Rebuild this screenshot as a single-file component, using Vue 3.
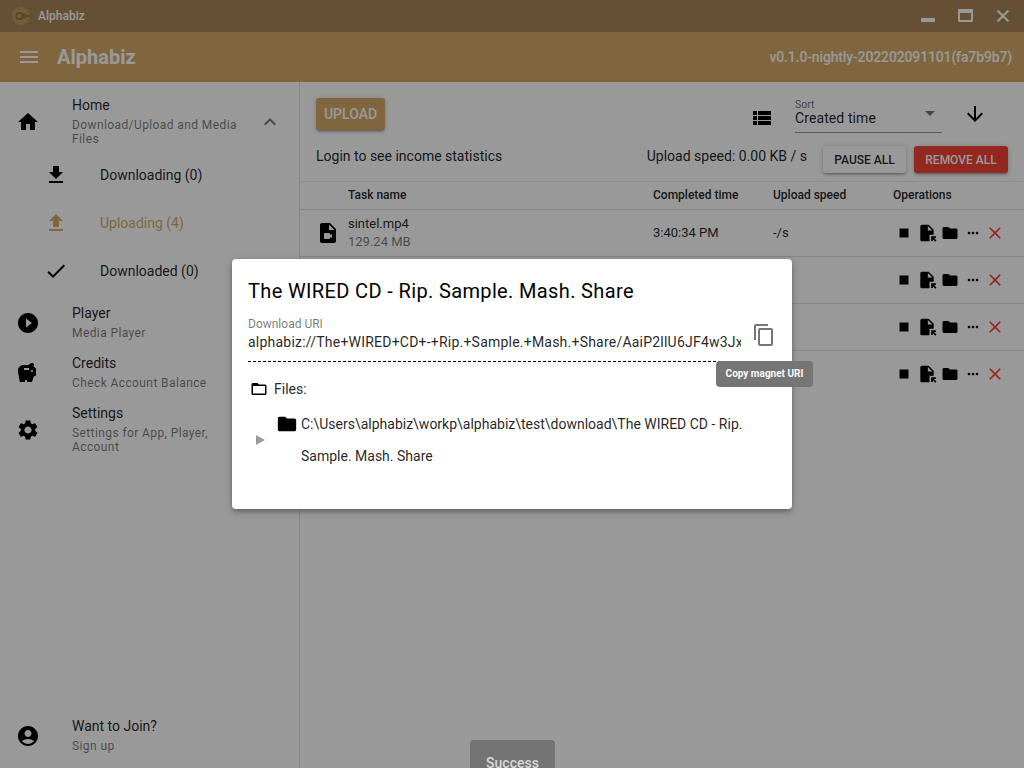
<script setup>
const icons = {
  menu: 'M3 18h18v-2H3v2zm0-5h18v-2H3v2zm0-7v2h18V6H3z',
  home: 'M10 20v-6h4v6h5v-8h3L12 3 2 12h3v8z',
  download: 'M19 9h-4V3H9v6H5l7 7 7-7zM5 18v2h14v-2H5z',
  upload: 'M9 16h6v-6h4l-7-7-7 7h4zm-4 2h14v2H5z',
  check: 'M9 16.17L4.83 12l-1.42 1.41L9 19 21 7l-1.41-1.41z',
  play: 'M12 2C6.48 2 2 6.48 2 12s4.48 10 10 10 10-4.48 10-10S17.52 2 12 2zm-2 14.5v-9l6 4.5-6 4.5z',
  savings: 'M19.83,7.5l-2.27-2.27c0.07-0.42,0.18-0.81,0.32-1.15C17.96,3.9,18,3.71,18,3.5C18,2.67,17.33,2,16.5,2c-1.64,0-3.09,0.79-4,2l-5,0 C4.46,4,2,6.46,2,9.5S4,21,4,21l5,0v-2h2v2l5,0l1.68-5.59L20,14.47V7.5H19.83z M13,9H8V7h5V9z M16,11c-0.55,0-1-0.45-1-1 c0-0.55,0.45-1,1-1s1,0.45,1,1C17,10.55,16.55,11,16,11z',
  settings: 'M19.14 12.94c.04-.3.06-.61.06-.94 0-.32-.02-.64-.07-.94l2.03-1.58c.18-.14.23-.41.12-.61l-1.92-3.32c-.12-.22-.37-.29-.59-.22l-2.39.96c-.5-.38-1.03-.7-1.62-.94l-.36-2.54c-.04-.24-.24-.41-.48-.41h-3.84c-.24 0-.43.17-.47.41l-.36 2.54c-.59.24-1.13.57-1.62.94l-2.39-.96c-.22-.08-.47 0-.59.22L2.74 8.87c-.12.21-.08.47.12.61l2.03 1.58c-.05.3-.09.63-.09.94s.02.64.07.94l-2.03 1.58c-.18.14-.23.41-.12.61l1.92 3.32c.12.22.37.29.59.22l2.39-.96c.5.38 1.03.7 1.62.94l.36 2.54c.05.24.24.41.48.41h3.84c.24 0 .44-.17.47-.41l.36-2.54c.59-.24 1.13-.56 1.62-.94l2.39.96c.22.08.47 0 .59-.22l1.92-3.32c.12-.22.07-.47-.12-.61l-2.01-1.58zM12 15.6c-1.98 0-3.6-1.62-3.6-3.6s1.62-3.6 3.6-3.6 3.6 1.62 3.6 3.6-1.62 3.6-3.6 3.6z',
  account: 'M12 2C6.48 2 2 6.48 2 12s4.48 10 10 10 10-4.48 10-10S17.52 2 12 2zm0 4c1.93 0 3.5 1.57 3.5 3.5S13.93 13 12 13s-3.5-1.57-3.5-3.5S10.07 6 12 6zm0 14c-2.03 0-4.43-.82-6.14-2.88C7.55 15.8 9.68 15 12 15s4.45.8 6.14 2.12C16.43 19.18 14.03 20 12 20z',
  chevron: 'M12 8l-6 6 1.41 1.41L12 10.83l4.59 4.58L18 14z',
  list: 'M3 14h4v-4H3v4zm0 5h4v-4H3v4zM3 9h4V5H3v4zm5 5h13v-4H8v4zm0 5h13v-4H8v4zM8 5v4h13V5H8z',
  arrowDown: 'M20 12l-1.41-1.41L13 16.17V4h-2v12.17l-5.58-5.59L4 12l8 8 8-8z',
  video: 'M14,2H6.01c-1.1,0-2,0.89-2,2L4,20c0,1.1,0.89,2,1.99,2H18c1.1,0,2-0.9,2-2V8L14,2z M13,9V3.5L18.5,9H13z M14,14l2-1.06v4.12L14,16 v1c0,0.55-0.45,1-1,1H9c-0.55,0-1-0.45-1-1v-4c0-0.55,0.45-1,1-1h4c0.55,0,1,0.45,1,1V14z',
  stop: 'M6 6h12v12H6z',
  fileOpen: 'M14,2H6C4.9,2,4.01,2.9,4.01,4L4,20c0,1.1,0.89,2,1.99,2H15v-8h5V8L14,2z M13,9V3.5L18.5,9H13z M17,21.66V16h5.66v2h-2.24 l2.95,2.95l-1.41,1.41L19,19.41l0,2.24H17z',
  folder: 'M10 4H4c-1.1 0-1.99.9-1.99 2L2 18c0 1.1.9 2 2 2h16c1.1 0 2-.9 2-2V8c0-1.1-.9-2-2-2h-8l-2-2z',
  folderOpen: 'M20 6h-8l-2-2H4c-1.1 0-1.99.9-1.99 2L2 18c0 1.1.9 2 2 2h16c1.1 0 2-.9 2-2V8c0-1.1-.9-2-2-2zm0 12H4V8h16v10z',
  more: 'M6 10c-1.1 0-2 .9-2 2s.9 2 2 2 2-.9 2-2-.9-2-2-2zm12 0c-1.1 0-2 .9-2 2s.9 2 2 2 2-.9 2-2-.9-2-2-2zm-6 0c-1.1 0-2 .9-2 2s.9 2 2 2 2-.9 2-2-.9-2-2-2z',
  close: 'M19 6.41L17.59 5 12 10.59 6.41 5 5 6.41 10.59 12 5 17.59 6.41 19 12 13.41 17.59 19 19 17.59 13.41 12z',
  copy: 'M16 1H4c-1.1 0-2 .9-2 2v14h2V3h12V1zm3 4H8c-1.1 0-2 .9-2 2v14c0 1.1.9 2 2 2h11c1.1 0 2-.9 2-2V7c0-1.1-.9-2-2-2zm0 16H8V7h11v14z'
}

const subItems = [
  { icon: 'download', label: 'Downloading (0)' },
  { icon: 'upload', label: 'Uploading (4)', active: true },
  { icon: 'check', label: 'Downloaded (0)' }
]

const navItems = [
  { icon: 'play', title: 'Player', caption: 'Media Player' },
  { icon: 'savings', title: 'Credits', caption: 'Check Account Balance' },
  { icon: 'settings', title: 'Settings', caption: 'Settings for App, Player, Account' }
]

// only the first row is visible, the dialog hides the rest
const rows = [
  { name: 'sintel.mp4', size: '129.24 MB', time: '3:40:34 PM', speed: '-/s' },
  { name: '', size: '', time: '', speed: '' },
  { name: '', size: '', time: '', speed: '' },
  { name: '', size: '', time: '', speed: '' }
]
</script>

<template>
  <div class="app">
    <div class="titlebar">
      <svg class="logo" viewBox="0 0 18 18" width="18" height="18">
        <circle cx="9" cy="9" r="9" fill="#c29c5c" />
        <circle cx="7.5" cy="9" r="3.2" fill="none" stroke="#8a6f47" stroke-width="1.6" />
        <path d="M10 6.5l3 5M10 11.5l3-5M13 9h5" fill="none" stroke="#8a6f47" stroke-width="1.4" />
      </svg>
      <span class="titlebar-name">Alphabiz</span>
      <div class="window-btns">
        <span class="win-min"></span>
        <span class="win-max"></span>
        <svg class="win-close" viewBox="0 0 24 24" width="20" height="20"><path :d="icons.close" /></svg>
      </div>
    </div>

    <header class="header">
      <svg class="menu-icon" viewBox="0 0 24 24" width="24" height="24"><path :d="icons.menu" /></svg>
      <span class="brand">Alphabiz</span>
      <span class="version">v0.1.0-nightly-202202091101(fa7b9b7)</span>
    </header>

    <div class="body">
      <aside class="drawer">
        <nav>
          <div class="nav-item">
            <svg class="nav-icon" viewBox="0 0 24 24"><path :d="icons.home" /></svg>
            <div class="nav-text">
              <div class="nav-title">Home</div>
              <div class="nav-caption">Download/Upload and Media Files</div>
            </div>
            <svg class="chevron" viewBox="0 0 24 24"><path :d="icons.chevron" /></svg>
          </div>
          <div v-for="s in subItems" :key="s.label" class="sub-item" :class="{ active: s.active }">
            <svg class="sub-icon" viewBox="0 0 24 24"><path :d="icons[s.icon]" /></svg>
            <span>{{ s.label }}</span>
          </div>
          <div v-for="n in navItems" :key="n.title" class="nav-item">
            <svg class="nav-icon" viewBox="0 0 24 24"><path :d="icons[n.icon]" /></svg>
            <div class="nav-text">
              <div class="nav-title">{{ n.title }}</div>
              <div class="nav-caption">{{ n.caption }}</div>
            </div>
          </div>
        </nav>
        <div class="nav-item">
          <svg class="nav-icon" viewBox="0 0 24 24"><path :d="icons.account" /></svg>
          <div class="nav-text">
            <div class="nav-title">Want to Join?</div>
            <div class="nav-caption">Sign up</div>
          </div>
        </div>
      </aside>

      <main class="main">
        <div class="toolbar">
          <button class="btn btn-upload">UPLOAD</button>
          <div class="toolbar-right">
            <svg class="list-icon" viewBox="0 0 24 24"><path :d="icons.list" /></svg>
            <div class="sort">
              <div class="sort-label">Sort</div>
              <div class="sort-value">Created time</div>
              <span class="sort-arrow"></span>
            </div>
            <svg class="down-icon" viewBox="0 0 24 24"><path :d="icons.arrowDown" /></svg>
          </div>
        </div>

        <div class="stats">
          <span class="login-note">Login to see income statistics</span>
          <span class="speed">Upload speed: 0.00 KB / s</span>
          <button class="btn btn-small btn-pause">PAUSE ALL</button>
          <button class="btn btn-small btn-remove">REMOVE ALL</button>
        </div>

        <div class="table">
          <div class="table-row table-head">
            <span></span>
            <span>Task name</span>
            <span>Completed time</span>
            <span>Upload speed</span>
            <span>Operations</span>
          </div>
          <div v-for="(r, i) in rows" :key="i" class="table-row task-row">
            <svg class="task-icon" viewBox="0 0 24 24"><path :d="icons.video" /></svg>
            <div>
              <div class="task-name">{{ r.name }}</div>
              <div class="task-size">{{ r.size }}</div>
            </div>
            <span>{{ r.time }}</span>
            <span>{{ r.speed }}</span>
            <div class="ops">
              <svg class="op-stop" viewBox="0 0 24 24"><path :d="icons.stop" /></svg>
              <svg class="op-file" viewBox="0 0 24 24"><path :d="icons.fileOpen" /></svg>
              <svg class="op-folder" viewBox="0 0 24 24"><path :d="icons.folder" /></svg>
              <svg class="op-more" viewBox="0 0 24 24"><path :d="icons.more" /></svg>
              <svg class="op-close" viewBox="0 0 24 24"><path :d="icons.close" /></svg>
            </div>
          </div>
        </div>
      </main>
    </div>

    <div class="backdrop"></div>
    <div class="notify">Success</div>

    <div class="dialog">
      <div class="dialog-title">The WIRED CD - Rip. Sample. Mash. Share</div>
      <div class="uri-row">
        <div class="uri-col">
          <div class="uri-label">Download URI</div>
          <div class="uri-value">alphabiz://The+WIRED+CD+-+Rip.+Sample.+Mash.+Share/AaiP2llU6JF4w3JxaKm9</div>
        </div>
        <svg class="copy-icon" viewBox="0 0 24 24"><path :d="icons.copy" /></svg>
      </div>
      <div class="files-label">
        <svg class="files-icon" viewBox="0 0 24 24"><path :d="icons.folderOpen" /></svg>
        <span>Files:</span>
      </div>
      <div class="tree">
        <span class="tree-arrow"></span>
        <svg class="tree-folder" viewBox="0 0 24 24"><path :d="icons.folder" /></svg>
        <div class="tree-text">C:\Users\alphabiz\workp\alphabiz\test\download\The WIRED CD - Rip. Sample. Mash. Share</div>
      </div>
    </div>

    <div class="tooltip">Copy magnet URI</div>
  </div>
</template>

<style>
html, body {
  margin: 0;
  background: #fff;
}
</style>

<style scoped>
.app {
  position: relative;
  width: 1024px;
  height: 768px;
  overflow: hidden;
  display: flex;
  flex-direction: column;
  font-family: Roboto, "Liberation Sans", sans-serif;
  font-size: 14px;
  color: #000;
  background: #fff;
}

svg { display: block; flex: none; }

/* Title bar */
.titlebar {
  height: 32px;
  display: flex;
  align-items: center;
  padding-left: 12px;
  background: #a8865a;
  color: #fff;
  flex: none;
}
.logo { margin-right: 8px; }
.titlebar-name {
  font-size: 12px;
  font-weight: 500;
}
.window-btns {
  margin-left: auto;
  display: flex;
  align-items: center;
}
.win-min {
  width: 14px;
  height: 4px;
  margin: 8px 0 0;
  background: #fff;
  border-radius: 1px;
}
.win-max {
  box-sizing: border-box;
  width: 15px;
  height: 13px;
  margin: -1px 0 0 23px;
  border: 2px solid #fff;
  border-top-width: 4px;
  border-radius: 1px;
}
.win-close {
  margin: -1px 11px 0 20px;
  fill: #fff;
  stroke: #fff;
  stroke-width: 0.8;
}

/* Header */
.header {
  height: 50px;
  display: flex;
  align-items: center;
  padding: 0 12px 0 17px;
  background: #d4aa69;
  color: #fff;
  flex: none;
}
.menu-icon { fill: #fff; margin-right: 16px; }
.brand {
  font-size: 20px;
  font-weight: 700;
}
.version {
  margin-left: auto;
  font-size: 14px;
  font-weight: 500;
  letter-spacing: -0.14px;
}

.body {
  flex: 1;
  display: flex;
  min-height: 0;
}

/* Drawer */
.drawer {
  box-sizing: border-box;
  width: 300px;
  flex: none;
  display: flex;
  flex-direction: column;
  justify-content: space-between;
  padding: 5px 0 10px;
  border-right: 1px solid rgba(0, 0, 0, 0.12);
}
.nav-item {
  display: flex;
  align-items: center;
  padding: 8px 16px 5px;
  position: relative;
}
.nav-icon {
  width: 24px;
  height: 24px;
  margin: 2px 32px 0 0;
}
.nav-text { width: 184px; }
.nav-title {
  line-height: 20px;
  color: rgba(0, 0, 0, 0.87);
}
.nav-caption {
  margin-top: 3px;
  font-size: 12px;
  line-height: 14px;
  letter-spacing: 0.4px;
  color: rgba(0, 0, 0, 0.54);
}
.chevron {
  width: 24px;
  height: 24px;
  margin: 2px 0 0 2px;
  fill: rgba(0, 0, 0, 0.54);
}
.sub-item {
  height: 48px;
  display: flex;
  align-items: center;
  padding-left: 44px;
  color: rgba(0, 0, 0, 0.87);
}
.sub-icon {
  width: 24px;
  height: 24px;
  margin-right: 32px;
}
.sub-item.active { color: #d4aa69; }
.sub-item.active .sub-icon { fill: #d4aa69; }

/* Main */
.main {
  flex: 1;
  min-width: 0;
}
.toolbar {
  box-sizing: border-box;
  height: 64px;
  display: flex;
  align-items: flex-start;
  justify-content: space-between;
  padding: 16px 37px 0 16px;
}
.btn {
  border: 0;
  border-radius: 3px;
  font-family: inherit;
  font-weight: 500;
  padding: 0;
  box-shadow: 0 1px 5px rgba(0, 0, 0, 0.2), 0 2px 2px rgba(0, 0, 0, 0.14), 0 3px 1px -2px rgba(0, 0, 0, 0.12);
}
.btn-upload {
  width: 69px;
  height: 32px;
  font-size: 14px;
  background: #d4aa69;
  color: #fff;
}
.toolbar-right {
  display: flex;
  align-items: flex-start;
}
.list-icon {
  width: 24px;
  height: 24px;
  margin: 8px 21px 0 0;
}
.sort {
  position: relative;
  box-sizing: border-box;
  width: 147px;
  height: 35px;
  padding-top: 1px;
  border-bottom: 1px solid rgba(0, 0, 0, 0.42);
}
.sort-label {
  font-size: 10.5px;
  line-height: 12px;
  color: rgba(0, 0, 0, 0.6);
}
.sort-value {
  margin-top: -1px;
  line-height: 16px;
  letter-spacing: 0.1px;
  color: rgba(0, 0, 0, 0.87);
}
.sort-arrow {
  position: absolute;
  right: 7px;
  top: 13px;
  border: 5px solid transparent;
  border-top-color: rgba(0, 0, 0, 0.54);
}
.down-icon {
  width: 24px;
  height: 24px;
  margin: 4px 0 0 21px;
}
.stats {
  height: 35px;
  display: flex;
  align-items: flex-start;
  padding: 0 16px;
  line-height: 20px;
  color: rgba(0, 0, 0, 0.87);
}
.speed { margin-left: auto; margin-right: 16px; }
.btn-small {
  height: 27px;
  font-size: 12px;
}
.btn-pause {
  width: 83px;
  background: #fff;
  color: rgba(0, 0, 0, 0.87);
  margin-right: 8px;
}
.btn-remove {
  width: 94px;
  background: #f44336;
  color: #fff;
}

/* Table */
.table {
  border-top: 1px solid rgba(0, 0, 0, 0.08);
}
.table-row {
  display: grid;
  grid-template-columns: 48px 305px 120px 120px 1fr;
  align-items: center;
  color: rgba(0, 0, 0, 0.87);
}
.table-head {
  box-sizing: border-box;
  height: 28px;
  padding-bottom: 1px;
  font-size: 12px;
  font-weight: 500;
  border-bottom: 1px solid rgba(0, 0, 0, 0.12);
}
.task-row {
  box-sizing: border-box;
  height: 47px;
  padding-bottom: 1px;
  font-size: 13px;
  border-bottom: 1px solid rgba(0, 0, 0, 0.12);
}
.task-row:last-child { border-bottom: 0; }
.task-icon {
  width: 24px;
  height: 24px;
  margin-left: 16px;
}
.task-name {
  line-height: 18px;
  min-height: 18px;
}
.task-size {
  line-height: 18px;
  min-height: 18px;
  color: rgba(0, 0, 0, 0.54);
}
.ops {
  display: flex;
  align-items: center;
  padding-left: 2px;
}
.op-stop { width: 18px; height: 18px; }
.op-file { width: 20px; height: 20px; margin-left: 4px; }
.op-folder { width: 18px; height: 18px; margin-left: 4px; }
.op-more { width: 16px; height: 16px; margin-left: 6px; }
.op-close { width: 20px; height: 20px; margin-left: 4px; fill: #f44336; }

/* Overlays */
.notify {
  position: absolute;
  left: 470px;
  top: 740px;
  width: 85px;
  height: 44px;
  box-sizing: border-box;
  padding-top: 15px;
  text-align: center;
  border-radius: 4px;
  background: #737373;
  color: #d8d8d8;
  font-weight: 500;
}
.backdrop {
  position: absolute;
  inset: 0;
  background: rgba(0, 0, 0, 0.4);
}
.dialog {
  position: absolute;
  left: 232px;
  top: 259px;
  box-sizing: border-box;
  width: 560px;
  height: 250px;
  padding: 16px;
  background: #fff;
  border-radius: 4px;
  box-shadow: 0 2px 4px -1px rgba(0, 0, 0, 0.2), 0 4px 5px rgba(0, 0, 0, 0.14), 0 1px 10px rgba(0, 0, 0, 0.12);
}
.dialog-title {
  font-size: 20px;
  font-weight: 400;
  line-height: 32px;
  letter-spacing: 0.36px;
  color: #000;
}
.uri-row {
  display: flex;
  align-items: center;
  margin-top: 9px;
  padding-bottom: 9px;
  border-bottom: 1px dashed #000;
}
.uri-col {
  width: 493px;
  overflow: hidden;
}
.uri-label {
  font-size: 12px;
  line-height: 16px;
  color: rgba(0, 0, 0, 0.54);
}
.uri-value {
  line-height: 20px;
  letter-spacing: 0.22px;
  white-space: nowrap;
  color: rgba(0, 0, 0, 0.87);
}
.copy-icon {
  width: 24px;
  height: 24px;
  margin: 2px 0 0 11px;
  fill: rgba(0, 0, 0, 0.54);
}
.files-label {
  display: flex;
  align-items: center;
  margin-top: 17px;
  padding-left: 2px;
  line-height: 20px;
  color: rgba(0, 0, 0, 0.87);
}
.files-icon {
  width: 18px;
  height: 18px;
  margin-right: 6px;
}
.tree {
  display: flex;
  align-items: flex-start;
  margin-top: 9px;
  padding-left: 8px;
}
.tree-arrow {
  width: 0;
  height: 0;
  margin-top: 27px;
  border: 5px solid transparent;
  border-left: 9px solid rgba(0, 0, 0, 0.4);
  border-right: 0;
}
.tree-folder {
  width: 22px;
  height: 22px;
  margin: 5px 3px 0 11px;
}
.tree-text {
  width: 450px;
  line-height: 32px;
  color: rgba(0, 0, 0, 0.87);
}
.tooltip {
  position: absolute;
  left: 716px;
  top: 361px;
  width: 97px;
  height: 26px;
  line-height: 26px;
  text-align: center;
  border-radius: 4px;
  background: #757575;
  color: #fafafa;
  font-size: 10px;
  font-weight: 700;
}
</style>
